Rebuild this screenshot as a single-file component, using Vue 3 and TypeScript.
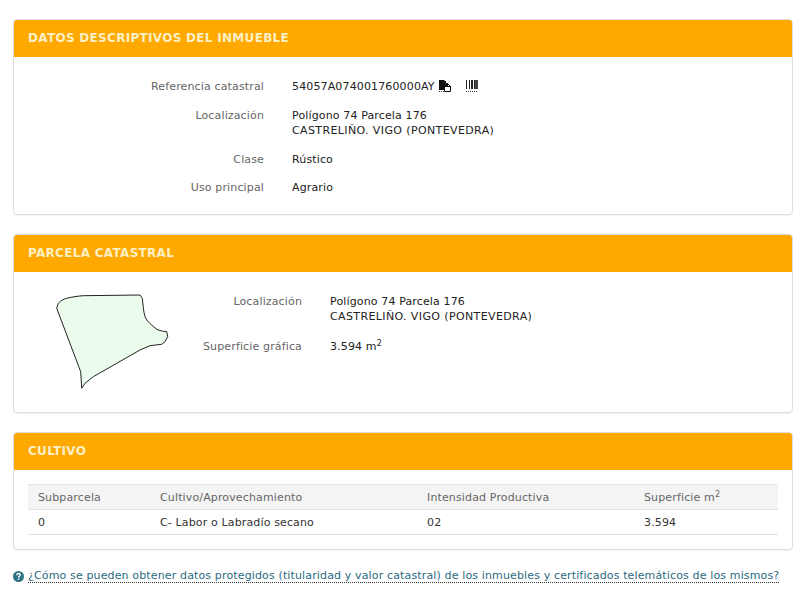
<script setup lang="ts">
interface Row { label: string; lines: string[] }
const general: Row[] = [
  { label: 'Localización', lines: ['Polígono 74 Parcela 176', 'CASTRELIÑO. VIGO (PONTEVEDRA)'] },
  { label: 'Clase', lines: ['Rústico'] },
  { label: 'Uso principal', lines: ['Agrario'] },
]
const barWidths = [1, 2, 1, 1, 2, 1, 2, 1, 1]
let barX = 0
const bars = barWidths.map((w, i) => {
  const b = { x: barX, w, dark: i % 2 === 0 }
  barX += w
  return b
}).filter((b) => b.dark)
const isCaps = (l: string) => l === l.toUpperCase()
</script>

<template>
  <main class="page">
    <section class="card">
      <h2 class="head">DATOS DESCRIPTIVOS DEL INMUEBLE</h2>
      <div class="body rows first">
        <div class="row">
          <span class="label">Referencia catastral</span>
          <span class="value ref">
            54057A074001760000AY
            <svg class="ic copy" width="13" height="14" viewBox="0 0 13 14" aria-hidden="true">
              <path d="M0 0h5l1 1h1v2H6v7H0z" fill="#111" />
              <path d="M5.500 3.500h3l3 3v5h-6z" fill="#fff" stroke="#111" />
              <path d="M6 3h3v3h3v1H6z" fill="#111" />
              <path d="M0 11.500h6" stroke="#333" stroke-dasharray="1 1" />
            </svg>
            <svg class="ic bar" width="13" height="13" viewBox="0 0 13 13" aria-hidden="true">
              <rect v-for="b in bars" :key="b.x" :x="b.x" y="0" :width="b.w" height="9" fill="#222" />
              <rect x="9" y="0" width="3" height="9" fill="#444" />
              <path d="M0 11.500h12" stroke="#333" stroke-dasharray="1 1" />
            </svg>
          </span>
        </div>
        <div v-for="r in general" :key="r.label" class="row">
          <span class="label">{{ r.label }}</span>
          <span class="value"><span v-for="l in r.lines" :key="l" class="line" :class="{ caps: isCaps(l) }">{{ l }}</span></span>
        </div>
      </div>
    </section>

    <section class="card">
      <h2 class="head">PARCELA CATASTRAL</h2>
      <div class="body parcel">
        <svg class="map" width="120" height="100" viewBox="50 292 120 100" aria-label="Parcela">
          <path
            d="M81.700 388.300L80.700 371.700L56.700 308.300L58.300 303.300C61 300.500 64 299 66.700 298.300C72 297 78 296 83.300 295.700L140 295L142.300 298.300C143 304 143.500 312 145 316.700C146.500 320 149 323 151.700 325C154 327 156 329 158.300 330C161 331 164 331.500 166.700 331.700L167.700 336.700L165 341.700L161.700 344.300L150 345.700L140 350L116.700 363.300L93.300 376.700L85 383.300Z"
            fill="#ecfcec"
            stroke="#222"
            stroke-width="1"
          />
        </svg>
        <div class="rows gap15">
          <div class="row wide">
            <span class="label">Localización</span>
            <span class="value"><span class="line">Polígono 74 Parcela 176</span><span class="line caps">CASTRELIÑO. VIGO (PONTEVEDRA)</span></span>
          </div>
          <div class="row wide">
            <span class="label">Superficie gráfica</span>
            <span class="value">3.594 m<sup>2</sup></span>
          </div>
        </div>
      </div>
    </section>

    <section class="card">
      <h2 class="head">CULTIVO</h2>
      <div class="body crop">
        <table>
          <colgroup>
            <col class="c1" /><col class="c2" /><col class="c3" /><col class="c4" />
          </colgroup>
          <thead>
            <tr><th>Subparcela</th><th>Cultivo/Aprovechamiento</th><th>Intensidad Productiva</th><th>Superficie m<sup>2</sup></th></tr>
          </thead>
          <tbody>
            <tr><td>0</td><td>C- Labor o Labradío secano</td><td>02</td><td>3.594</td></tr>
          </tbody>
        </table>
      </div>
    </section>

    <p class="help">
      <svg width="11" height="11" viewBox="0 0 11 11" aria-hidden="true">
        <circle cx="5.500" cy="5.500" r="5.500" fill="#2b7385" />
        <path d="M3.700 4.200C3.800 3 4.600 2.500 5.500 2.500C6.600 2.500 7.300 3.100 7.300 4C7.300 5.100 5.600 5.200 5.600 6.400" fill="none" stroke="#fff" stroke-width="1.300" />
        <rect x="4.900" y="7.300" width="1.400" height="1.400" fill="#fff" />
      </svg>
      <a href="#">¿Cómo se pueden obtener datos protegidos (titularidad y valor catastral) de los inmuebles y certificados telemáticos de los mismos?</a>
    </p>
  </main>
</template>

<style scoped>
.page {
  width: 811px;
  height: 610px;
  box-sizing: border-box;
  padding: 19px 18px 0 13px;
  font-family: "DejaVu Sans", Verdana, sans-serif;
  font-size: 11px;
  line-height: 15px;
  letter-spacing: 0.14px;
  color: #222;
  overflow: hidden;
  background: #fff;
}
.card {
  border: 1px solid #dcdcdc;
  border-radius: 4px;
  margin-bottom: 19px;
  box-shadow: 0 1px 1px rgba(0, 0, 0, 0.05);
}
.head {
  margin: 0;
  height: 37px;
  padding-left: 14px;
  background: #ffa800;
  border-radius: 3px 3px 0 0;
  color: #fdf0c4;
  font-size: 12px;
  font-weight: 700;
  line-height: 36px;
  letter-spacing: 0.3px;
}
.rows {
  display: flex;
  flex-direction: column;
  gap: 14px;
}
.rows.gap15 {
  gap: 15px;
}
.body.first {
  padding: 22px 0 19px;
}
.body.first .row:last-child {
  margin-top: -1px;
}
.row {
  display: grid;
  grid-template-columns: 250px 1fr;
  column-gap: 28px;
}
.label {
  text-align: right;
  color: #666;
}
.line {
  display: block;
}
.caps {
  letter-spacing: 0.38px;
}
.value {
  color: #222;
}
.ref {
  display: flex;
  align-items: center;
}
.ic {
  flex: none;
}
.copy {
  margin-left: 4px;
}
.bar {
  margin-left: 14px;
}
.parcel {
  display: flex;
  height: 118px;
  padding-top: 22px;
}
.map {
  flex: none;
  margin: -2px 0 0 36px;
}
.rows .wide {
  grid-template-columns: 132px 1fr;
}
sup {
  font-size: 8px;
  line-height: 0;
  vertical-align: 4px;
}
.crop {
  padding: 14px 14px 14px;
}
table {
  width: 750px;
  border-collapse: collapse;
  table-layout: fixed;
}
.c1 { width: 122px; }
.c2 { width: 267px; }
.c3 { width: 217px; }
.c4 { width: 144px; }
th,
td {
  height: 24px;
  padding: 0 10px;
  text-align: left;
  font-weight: 400;
}
th {
  background: #f4f4f4;
  color: #666;
  border-top: 1px solid #e6e6e6;
  border-bottom: 1px solid #e2e2e2;
}
td {
  color: #333;
  border-bottom: 1px solid #e2e2e2;
}
.help {
  margin: 20px 0 0;
  display: flex;
  align-items: center;
  gap: 4px;
}
.help a {
  color: #2b6a80;
  text-decoration: none;
  border-bottom: 1px dotted #333;
  line-height: 12px;
}
</style>
